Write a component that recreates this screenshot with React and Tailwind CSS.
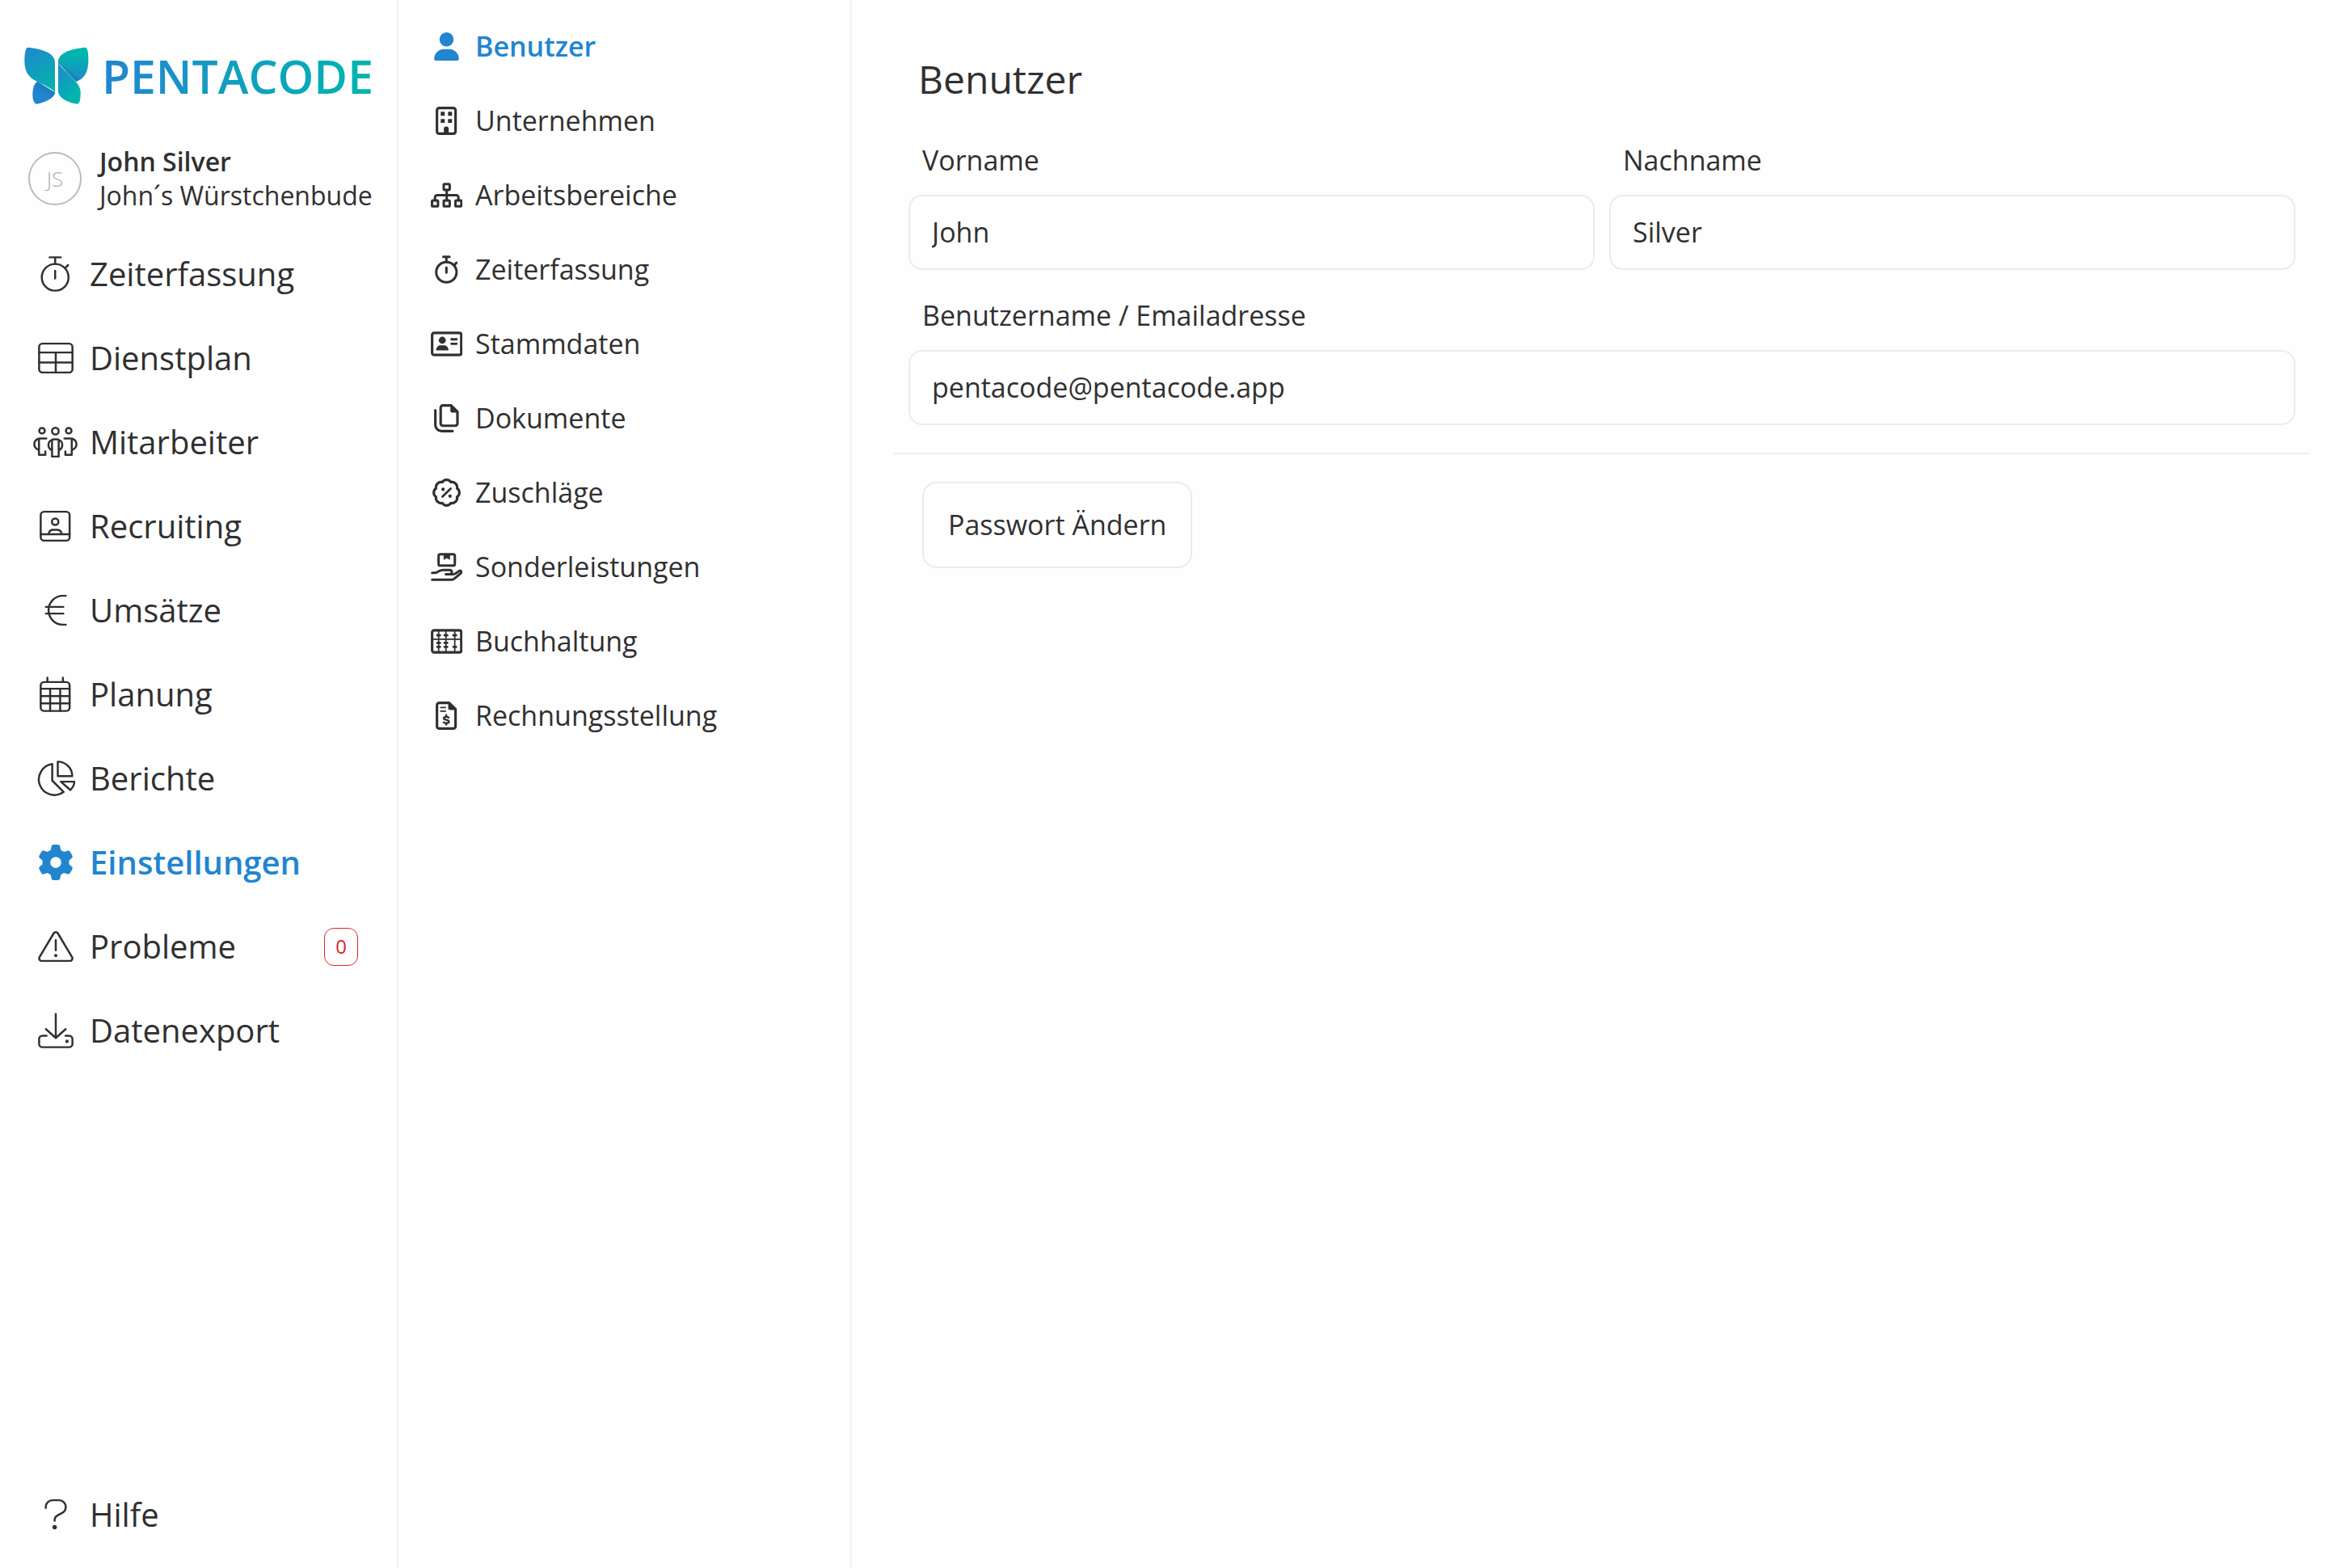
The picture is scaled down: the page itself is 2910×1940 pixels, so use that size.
import React from "react";
import { FaGear, FaUser } from "react-icons/fa6";

/* Outline icons share a 512-unit tall canvas; the stroke weight depends on the menu. */
function Icon({ w = 512, children, className = "", stroke = 29 }) {
  return (
    <svg
      viewBox={`0 0 ${w} 512`}
      className={"w-auto " + className}
      fill="none"
      stroke="currentColor"
      strokeWidth={stroke}
      strokeLinecap="round"
      strokeLinejoin="round"
      aria-hidden="true"
    >
      {children}
    </svg>
  );
}

const dot = { fill: "currentColor", stroke: "none" };
const L = "h-[44px]";
const R = "h-[35px]";

const StopwatchLight = () => (
  <Icon w={448} className={L}>
    <circle cx="224" cy="304" r="192" />
    <path d="M144 16h160M224 16v96M224 208v112M370 168l40-40" />
  </Icon>
);
const TableLight = () => (
  <Icon className={L}>
    <rect x="16" y="48" width="480" height="416" rx="48" />
    <path d="M16 176h480M16 320h480M256 176v288" />
  </Icon>
);
const PeopleLight = () => (
  <Icon w={640} className={L}>
    <circle cx="128" cy="92" r="40" />
    <circle cx="512" cy="92" r="40" />
    <circle cx="320" cy="98" r="48" />
    <path d="M190 204H104c-50 0-88 34-88 82 0 36 20 64 56 80M84 208v230h92v-48" />
    <path d="M450 204h86c50 0 88 34 88 82 0 36-20 64-56 80M556 208v230h-92v-48" />
    <path d="M272 376c-32-14-52-46-52-82 0-46 38-80 84-80h32c46 0 84 34 84 80 0 36-20 68-52 82M272 222v242h96V222" />
  </Icon>
);
const PortraitLight = () => (
  <Icon w={448} className={L}>
    <rect x="16" y="48" width="416" height="416" rx="48" />
    <circle cx="224" cy="192" r="47" />
    <path d="M16 372h416M132 364c4-36 32-56 68-56h48c36 0 64 20 68 56" />
  </Icon>
);
const EuroLight = () => (
  <Icon className={L}>
    <path d="M400 48h-45C243 48 152 141 152 256s91 208 203 208h45M114 208h250M114 304h250" />
  </Icon>
);
const CalendarLight = () => (
  <Icon w={448} className={L}>
    <rect x="16" y="80" width="416" height="416" rx="48" />
    <path d="M112 16v64M336 16v64M16 176h416M16 282h416M16 388h416M152 176v320M296 176v320" />
  </Icon>
);
const PieLight = () => (
  <Icon w={576} className={L}>
    <path d="M240 50A224 224 0 1 0 404 452L240 288z" />
    <path d="M320 16c115 0 208 93 208 208H320z" />
    <path d="M364 304h196c-4 48-24 88-58 120z" />
  </Icon>
);
const TriangleLight = () => (
  <Icon className={L}>
    <path d="M228 64L22 408a37 37 0 0 0 32 56h404a37 37 0 0 0 32-56L284 64a33 33 0 0 0-56 0z" />
    <path d="M256 164v148" />
    <circle cx="256" cy="388" r="23" {...dot} />
  </Icon>
);
const DownloadLight = () => (
  <Icon className={L}>
    <path d="M256 16v344M114 236l142 128 142-128M124 332H64a48 48 0 0 0-48 48v68a48 48 0 0 0 48 48h384a48 48 0 0 0 48-48v-68a48 48 0 0 0-48-48h-52" />
    <circle cx="418" cy="412" r="24" {...dot} />
  </Icon>
);
const QuestionLight = () => (
  <Icon className={L}>
    <path d="M112 160v-16a96 96 0 0 1 96-96h96a96 96 0 0 1 96 96c0 34-18 66-48 84l-74 42c-24 14-38 36-38 62v12" />
    <circle cx="240" cy="436" r="32" {...dot} />
  </Icon>
);

const BuildingRegular = () => (
  <Icon w={384} stroke={46} className={R}>
    <rect x="24" y="24" width="336" height="464" rx="40" />
    <path {...dot} d="M92 92h72v72H92zM224 92h72v72h-72zM92 222h72v72H92zM224 222h72v72h-72zM148 488v-84a44 44 0 0 1 88 0v84z" />
  </Icon>
);
const SitemapRegular = () => (
  <Icon w={576} stroke={44} className={R}>
    <rect x="234" y="54" width="108" height="106" rx="16" />
    <rect x="22" y="350" width="108" height="108" rx="16" />
    <rect x="234" y="350" width="108" height="108" rx="16" />
    <rect x="446" y="350" width="108" height="108" rx="16" />
    <path d="M288 160v190M76 350v-54a40 40 0 0 1 40-40h344a40 40 0 0 1 40 40v54" />
  </Icon>
);
const StopwatchRegular = () => (
  <Icon w={448} stroke={44} className={R}>
    <circle cx="224" cy="304" r="184" />
    <path d="M168 24h112M224 24v90M224 220v90M374 166l32-32" />
  </Icon>
);
const IdCardRegular = () => (
  <Icon w={576} stroke={46} className={R}>
    <rect x="24" y="56" width="528" height="400" rx="36" />
    <circle cx="208" cy="190" r="64" {...dot} />
    <path {...dot} d="M96 374c0-52 36-92 80-92h64c44 0 80 40 80 92z" />
    <path strokeWidth="42" d="M374 172h92M374 254h92" />
  </Icon>
);
const CopyRegular = () => (
  <Icon w={448} stroke={46} className={R}>
    <path d="M160 24h148l116 112v216a40 40 0 0 1-40 40H160a40 40 0 0 1-40-40V64a40 40 0 0 1 40-40z" />
    <path {...dot} d="M296 16v104a32 32 0 0 0 32 32h104z" />
    <path d="M24 112v264a112 112 0 0 0 112 112h200" />
  </Icon>
);
const BadgePercentRegular = () => (
  <Icon stroke={46} className={R}>
    <path d="M178 67A93 93 0 0 1 334 67A93 93 0 0 1 445 178A93 93 0 0 1 445 334A93 93 0 0 1 334 445A93 93 0 0 1 178 445A93 93 0 0 1 67 334A93 93 0 0 1 67 178A93 93 0 0 1 178 67z" />
    <path strokeWidth="40" d="M182 330l148-148" />
    <circle cx="193" cy="197" r="31" {...dot} />
    <circle cx="319" cy="319" r="31" {...dot} />
  </Icon>
);
const HandBoxRegular = () => (
  <Icon w={576} stroke={44} className={R}>
    <rect x="141" y="24" width="294" height="208" rx="32" />
    <path {...dot} d="M232 24v104l58-32 58 32V24z" />
    <path d="M24 362h46c24 0 42-6 60-20 26-20 50-32 86-32h126c22 0 38 16 38 38s-16 38-38 38h-70" />
    <path d="M330 386h72c22 0 40-6 56-18l54-38c14-10 28-7 36 4 8 12 6 27-6 37l-120 98c-16 13-34 19-54 19H24" />
  </Icon>
);
const AbacusRegular = () => (
  <Icon w={576} stroke={46} className={R}>
    <rect x="24" y="56" width="528" height="400" rx="36" />
    <path strokeWidth="26" d="M24 218h528M142 56v400M274 56v400M434 56v400" />
    <path
      strokeWidth="42"
      d="M118 146h48M250 146h48M410 146h48M118 284h48M250 284h48M118 356h48M250 356h48M410 356h48"
    />
  </Icon>
);
const InvoiceRegular = () => (
  <Icon w={384} stroke={46} className={R}>
    <path d="M64 24h180l116 112v312a40 40 0 0 1-40 40H64a40 40 0 0 1-40-40V64a40 40 0 0 1 40-40z" />
    <path {...dot} d="M228 16v104a32 32 0 0 0 32 32h108z" />
    <path strokeWidth="28" d="M94 108h82M94 174h82" />
    <path
      strokeWidth="36"
      d="M234 288c-10-8-26-12-42-12-26 0-44 10-44 28 0 38 92 16 92 58 0 20-20 30-48 30-18 0-34-6-46-14M192 246v26M192 394v24"
    />
  </Icon>
);

function Butterfly() {
  return (
    <svg viewBox="90 85 240 213" className="h-[71px] w-[80px] shrink-0" aria-hidden="true">
      <defs>
        <linearGradient id="wingA" x1="0" y1="0" x2="0.5" y2="1">
          <stop offset="0" stopColor="#2185d0" />
          <stop offset="1" stopColor="#05b0ae" />
        </linearGradient>
        <linearGradient id="wingB" x1="0" y1="0" x2="0" y2="1">
          <stop offset="0.2" stopColor="#00b5ad" />
          <stop offset="1" stopColor="#1f88cc" />
        </linearGradient>
        <linearGradient id="wingC" x1="0" y1="0" x2="0.5" y2="1">
          <stop offset="0" stopColor="#2185d0" />
          <stop offset="0.9" stopColor="#00b5ad" />
        </linearGradient>
        <linearGradient id="wingD" x1="0.7" y1="0.15" x2="0.45" y2="0.6">
          <stop offset="0" stopColor="#1a78b6" />
          <stop offset="1" stopColor="#2185d0" />
        </linearGradient>
        <linearGradient id="fold" x1="0.58" y1="0.42" x2="0.4" y2="0.6">
          <stop offset="0" stopColor="#0b5f7e" stopOpacity="0" />
          <stop offset="1" stopColor="#0b5f7e" stopOpacity="0.45" />
        </linearGradient>
      </defs>
      <path
        fill="url(#wingD)"
        d="M139 213C126 222 121 238 121 262C121 282 127 297 137 297C165 292 204 275 204 254Z"
      />
      <path
        fill="url(#wingA)"
        d="M104 87C150 91 204 106 204 142V254C190 238 165 228 140 215C100 195 91 172 91 135C91 110 95 87 104 87Z"
      />
      <path
        fill="url(#wingB)"
        d="M316 87C326 87 328 108 328 135C328 175 315 202 283 214L216 145V140C216 106 268 91 316 87Z"
      />
      <path fill="url(#fold)" d="M216 145L283 214L300 195C275 178 245 160 216 145Z" />
      <path
        fill="url(#wingC)"
        d="M216 145C228 168 299 215 299 250C299 278 297 297 286 297C256 293 216 275 216 250Z"
      />
    </svg>
  );
}

const mainMenu = [
  { label: "Zeiterfassung", icon: <StopwatchLight /> },
  { label: "Dienstplan", icon: <TableLight /> },
  { label: "Mitarbeiter", icon: <PeopleLight /> },
  { label: "Recruiting", icon: <PortraitLight /> },
  { label: "Umsätze", icon: <EuroLight /> },
  { label: "Planung", icon: <CalendarLight /> },
  { label: "Berichte", icon: <PieLight /> },
  { label: "Einstellungen", icon: <FaGear className="size-[44px]" />, active: true },
  { label: "Probleme", icon: <TriangleLight />, badge: "0" },
  { label: "Datenexport", icon: <DownloadLight /> },
];

const settingsMenu = [
  { label: "Benutzer", icon: <FaUser className="h-[35px] w-[31px]" />, active: true },
  { label: "Unternehmen", icon: <BuildingRegular /> },
  { label: "Arbeitsbereiche", icon: <SitemapRegular /> },
  { label: "Zeiterfassung", icon: <StopwatchRegular /> },
  { label: "Stammdaten", icon: <IdCardRegular /> },
  { label: "Dokumente", icon: <CopyRegular /> },
  { label: "Zuschläge", icon: <BadgePercentRegular /> },
  { label: "Sonderleistungen", icon: <HandBoxRegular /> },
  { label: "Buchhaltung", icon: <AbacusRegular /> },
  { label: "Rechnungsstellung", icon: <InvoiceRegular /> },
];

function MainItem({ label, icon, active, badge }) {
  return (
    <a
      href="#"
      aria-current={active ? "page" : undefined}
      className={
        "flex h-[104px] items-center pl-10 pr-12 text-[40px] " +
        (active ? "font-semibold text-[#2185d0]" : "font-normal")
      }
    >
      <span className="flex w-[57px] shrink-0 justify-center">{icon}</span>
      <span className="ml-[14px]">{label}</span>
      {badge && (
        <span className="ml-auto flex h-[47px] w-[42px] items-center justify-center rounded-xl border border-[#db2828] text-[24px] text-[#db2828]">
          {badge}
        </span>
      )}
    </a>
  );
}

function SettingsItem({ label, icon, active }) {
  return (
    <a
      href="#"
      aria-current={active ? "page" : undefined}
      className={
        "flex h-[92px] items-center pl-[39px] text-[34px] " +
        (active ? "font-semibold text-[#2185d0]" : "font-medium")
      }
    >
      <span className="flex w-[41px] shrink-0 justify-center">{icon}</span>
      <span className="ml-[15px]">{label}</span>
    </a>
  );
}

function Field({ id, label, value, type = "text" }) {
  return (
    <div className="flex min-w-0 flex-1 flex-col">
      <label htmlFor={id} className="mb-[19px] pl-[17px] text-[34px] leading-[48px] font-medium">
        {label}
      </label>
      <input
        id={id}
        type={type}
        defaultValue={value}
        className="h-[93px] w-full rounded-[17px] border-2 border-[#ececec] bg-transparent px-[27px] pb-[2px] text-[34px] outline-none"
      />
    </div>
  );
}

export default function App() {
  return (
    <div className="flex min-h-screen bg-[#fefefe] font-['Open_Sans',sans-serif] text-[#303030]">
      <aside className="flex w-[493px] shrink-0 flex-col border-r-2 border-[#f2f2f2] pb-[14px]">
        <div className="flex items-center gap-4 pl-[30px] pt-[58px]">
          <Butterfly />
          <span className="bg-linear-to-r from-[#2185d0] to-[#00b5ad] bg-clip-text text-[57px] leading-[70px] font-semibold text-transparent">
            PENTACODE
          </span>
        </div>

        <div className="mt-[50px] flex items-center pl-[35px]">
          <span className="flex size-[66px] shrink-0 items-center justify-center rounded-full border-2 border-[#bbbbbb] text-[26px] font-light text-[#b0b0b0]">
            JS
          </span>
          <span className="ml-[22px] text-[32px] leading-[42px] whitespace-nowrap">
            <strong className="block font-semibold">John Silver</strong>
            <span className="block font-medium">John´s Würstchenbude</span>
          </span>
        </div>

        <nav aria-label="Hauptmenü" className="mt-[24px] flex flex-1 flex-col">
          {mainMenu.map((item) => (
            <MainItem key={item.label} {...item} />
          ))}
          <div className="mt-auto">
            <MainItem label="Hilfe" icon={<QuestionLight />} />
          </div>
        </nav>
      </aside>

      <nav
        aria-label="Einstellungen"
        className="flex w-[561px] shrink-0 flex-col border-r-2 border-[#f2f2f2] pt-[11px]"
      >
        {settingsMenu.map((item) => (
          <SettingsItem key={item.label} {...item} />
        ))}
      </nav>

      <main className="min-w-0 flex-1 px-[52px] pt-[66px]">
        <h1 className="pl-[30px] text-[48px] leading-[64px] font-medium">Benutzer</h1>
        <form>
          <div className="flex flex-col gap-[32px] px-[18px] pt-[44px]">
            <div className="flex gap-[18px]">
              <Field id="vorname" label="Vorname" value="John" />
              <Field id="nachname" label="Nachname" value="Silver" />
            </div>
            <Field id="email" label="Benutzername / Emailadresse" type="email" value="pentacode@pentacode.app" />
          </div>
          <hr className="mt-[34px] border-t-2 border-[#eeeeee]" />
          <button
            type="button"
            className="mt-[34px] ml-[35px] h-[107px] rounded-[18px] border-2 border-[#ececec] px-[30px] text-[34px] font-medium"
          >
            Passwort Ändern
          </button>
        </form>
      </main>
    </div>
  );
}
